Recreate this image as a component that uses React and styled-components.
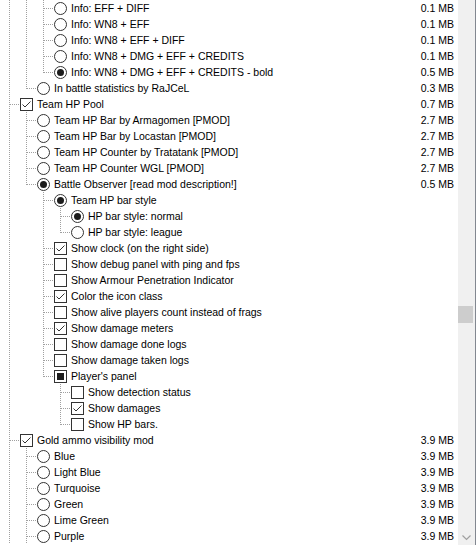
import React from 'react';
import styled, { createGlobalStyle } from 'styled-components';

const GlobalStyle = createGlobalStyle`
  html, body {
    margin: 0;
    padding: 0;
    background: #fff;
  }
  body {
    font-family: "Liberation Sans", Arial, sans-serif;
    font-size: 10.5px;
    color: #000;
  }
`;

// guides: one char per tree column — '|' through line, ' ' empty, 't' tee, 'l' last
const rows = [
  { g: '||t', k: 'radio', label: 'Info: EFF + DIFF', size: '0.1 MB' },
  { g: '||t', k: 'radio', label: 'Info: WN8 + EFF', size: '0.1 MB' },
  { g: '||t', k: 'radio', label: 'Info: WN8 + EFF + DIFF', size: '0.1 MB' },
  { g: '||t', k: 'radio', label: 'Info: WN8 + DMG + EFF + CREDITS', size: '0.1 MB' },
  { g: '||l', k: 'radio', on: true, label: 'Info: WN8 + DMG + EFF + CREDITS - bold', size: '0.5 MB' },
  { g: '|l', k: 'radio', label: 'In battle statistics by RaJCeL', size: '0.3 MB' },
  { g: 't', k: 'check', on: true, label: 'Team HP Pool', size: '0.7 MB' },
  { g: '|t', k: 'radio', label: 'Team HP Bar by Armagomen [PMOD]', size: '2.7 MB' },
  { g: '|t', k: 'radio', label: 'Team HP Bar by Locastan [PMOD]', size: '2.7 MB' },
  { g: '|t', k: 'radio', label: 'Team HP Counter by Tratatank [PMOD]', size: '2.7 MB' },
  { g: '|t', k: 'radio', label: 'Team HP Counter WGL [PMOD]', size: '2.7 MB' },
  { g: '|l', k: 'radio', on: true, label: 'Battle Observer [read mod description!]', size: '0.5 MB' },
  { g: '| t', k: 'radio', on: true, label: 'Team HP bar style' },
  { g: '| |t', k: 'radio', on: true, label: 'HP bar style: normal' },
  { g: '| |l', k: 'radio', label: 'HP bar style: league' },
  { g: '| t', k: 'check', on: true, label: 'Show clock (on the right side)' },
  { g: '| t', k: 'check', label: 'Show debug panel with ping and fps' },
  { g: '| t', k: 'check', label: 'Show Armour Penetration Indicator' },
  { g: '| t', k: 'check', on: true, label: 'Color the icon class' },
  { g: '| t', k: 'check', label: 'Show alive players count instead of frags' },
  { g: '| t', k: 'check', on: true, label: 'Show damage meters' },
  { g: '| t', k: 'check', label: 'Show damage done logs' },
  { g: '| t', k: 'check', label: 'Show damage taken logs' },
  { g: '| l', k: 'mixed', label: "Player's panel" },
  { g: '|  t', k: 'check', label: 'Show detection status' },
  { g: '|  t', k: 'check', on: true, label: 'Show damages' },
  { g: '|  l', k: 'check', label: 'Show HP bars.' },
  { g: 't', k: 'check', on: true, label: 'Gold ammo visibility mod', size: '3.9 MB' },
  { g: '|t', k: 'radio', label: 'Blue', size: '3.9 MB' },
  { g: '|t', k: 'radio', label: 'Light Blue', size: '3.9 MB' },
  { g: '|t', k: 'radio', label: 'Turquoise', size: '3.9 MB' },
  { g: '|t', k: 'radio', label: 'Green', size: '3.9 MB' },
  { g: '|t', k: 'radio', label: 'Lime Green', size: '3.9 MB' },
  { g: '|t', k: 'radio', label: 'Purple', size: '3.9 MB' },
];

const dots = (dir) =>
  `repeating-linear-gradient(${dir}, #a0a0a0 0 1px, transparent 1px 2px)`;

const Window = styled.div`
  display: flex;
  width: 476px;
  height: 545px;
  overflow: hidden;
  background: #fff;
  border-right: 1px solid #828790;
  box-sizing: border-box;
`;

const List = styled.div`
  flex: 1;
  min-width: 0;
  display: flex;
  flex-direction: column;
`;

const Row = styled.div`
  display: flex;
  align-items: center;
  height: 16px;
  flex: none;
  white-space: nowrap;
`;

const Guide = styled.span`
  position: relative;
  flex: none;
  width: 17px;
  height: 16px;

  &::before {
    content: '';
    display: ${(p) => (p.$kind === ' ' ? 'none' : 'block')};
    position: absolute;
    left: 9px;
    top: 0;
    width: 1px;
    height: ${(p) => (p.$kind === 'l' ? '9px' : '16px')};
    background: ${dots('to bottom')};
  }

  &::after {
    content: '';
    display: ${(p) => (p.$kind === 't' || p.$kind === 'l' ? 'block' : 'none')};
    position: absolute;
    left: 10px;
    top: 8px;
    width: 9px;
    height: 1px;
    background: ${dots('to right')};
  }
`;

const Box = styled.span`
  flex: none;
  width: 13px;
  height: 13px;
  margin-left: 3px;
  box-sizing: border-box;
  border: 1px solid #333;
  border-radius: ${(p) => (p.$round ? '50%' : '0')};
  background: #fff;
  display: flex;
  align-items: center;
  justify-content: center;
`;

const Dot = styled.span`
  width: 7px;
  height: 7px;
  border-radius: 50%;
  background: #1c1c1c;
`;

const Square = styled.span`
  width: 7px;
  height: 7px;
  background: #1c1c1c;
`;

const Label = styled.span`
  margin-left: 4px;
  line-height: 16px;
`;

const Size = styled.span`
  margin-left: auto;
  padding-right: 4px;
  line-height: 16px;
`;

const Scrollbar = styled.div`
  flex: none;
  width: 17px;
  background: #f0f0f0;
  display: flex;
  flex-direction: column;
`;

const Thumb = styled.div`
  width: 15px;
  height: 17px;
  margin-top: ${(p) => p.$top}px;
  background: #cdcdcd;
`;

const ArrowDown = styled.div`
  margin-top: auto;
  height: 14px;
  display: flex;
  align-items: center;
  justify-content: center;
`;

const Check = () => (
  <svg width="11" height="11" viewBox="0 0 11 11">
    <polyline points="1.5,5.5 4,8 9.5,2.5" fill="none" stroke="#333" strokeWidth="1" />
  </svg>
);

const Mark = ({ kind, on }) => {
  if (kind === 'radio') return <Box $round>{on && <Dot />}</Box>;
  if (kind === 'mixed') return <Box><Square /></Box>;
  return <Box>{on && <Check />}</Box>;
};

export default function App() {
  return (
    <>
      <GlobalStyle />
      <Window>
        <List>
          {rows.map((r, i) => (
            <Row key={i}>
              {r.g.split('').map((c, j) => (
                <Guide key={j} $kind={c} />
              ))}
              <Mark kind={r.k} on={r.on} />
              <Label>{r.label}</Label>
              {r.size && <Size>{r.size}</Size>}
            </Row>
          ))}
        </List>
        <Scrollbar>
          <Thumb $top={306} />
          <ArrowDown>
            <svg width="9" height="6" viewBox="0 0 9 6">
              <polyline points="0.5,0.5 4.5,4.5 8.5,0.5" fill="none" stroke="#a0a0a0" strokeWidth="1.2" />
            </svg>
          </ArrowDown>
        </Scrollbar>
      </Window>
    </>
  );
}
